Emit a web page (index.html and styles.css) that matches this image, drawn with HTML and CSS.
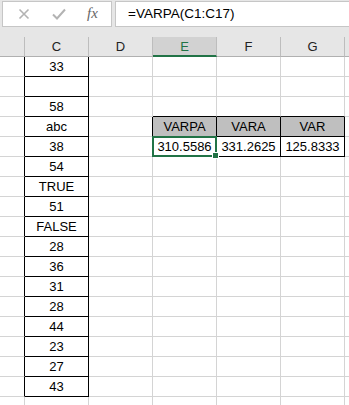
FILE: index.html
```html
<!DOCTYPE html>
<html lang="en">
<head>
  <meta charset="UTF-8" />
  <title>VARPA | Sheet</title>
  <link rel="stylesheet" href="styles.css">
</head>
<body>
  <div class="toolbar">
    <div class="namebox">
      <svg class="ico" width="12" height="12" viewBox="0 0 12 12"><path d="M1.5 1.5 L10.5 10.5 M10.5 1.5 L1.5 10.5" stroke="#b3b3b3" stroke-width="1.6" fill="none"/></svg>
      <svg class="ico" width="14" height="12" viewBox="0 0 14 12"><path d="M1 6.5 L5 10.5 L13 1.5" stroke="#b3b3b3" stroke-width="2" fill="none"/></svg>
      <span class="fx">fx</span>
    </div>
    <div class="formula">=VARPA(C1:C17)</div>
  </div>

  <div class="sheet">
    <div class="row head">
      <div class="c b"></div>
      <div class="c">C</div>
      <div class="c">D</div>
      <div class="c sel">E</div>
      <div class="c">F</div>
      <div class="c">G</div>
      <div class="c h"></div>
    </div>
    <div class="row"><div class="c b bl"></div><div class="c bx">33</div><div class="c"></div><div class="c"></div><div class="c"></div><div class="c"></div><div class="c h"></div></div>
    <div class="row"><div class="c b bl"></div><div class="c bx"></div><div class="c"></div><div class="c"></div><div class="c"></div><div class="c"></div><div class="c h"></div></div>
    <div class="row"><div class="c b bl"></div><div class="c bx">58</div><div class="c"></div><div class="c bt"></div><div class="c bt"></div><div class="c bt"></div><div class="c h"></div></div>
    <div class="row"><div class="c b bl"></div><div class="c bx">abc</div><div class="c bl"></div><div class="c bx th">VARPA</div><div class="c bx th">VARA</div><div class="c bx th">VAR</div><div class="c h"></div></div>
    <div class="row"><div class="c b bl"></div><div class="c bx">38</div><div class="c bl"></div><div class="c bx active">310.5586<span class="handle"></span></div><div class="c bx">331.2625</div><div class="c bx">125.8333</div><div class="c h"></div></div>
    <div class="row"><div class="c b bl"></div><div class="c bx">54</div><div class="c"></div><div class="c"></div><div class="c"></div><div class="c"></div><div class="c h"></div></div>
    <div class="row"><div class="c b bl"></div><div class="c bx">TRUE</div><div class="c"></div><div class="c"></div><div class="c"></div><div class="c"></div><div class="c h"></div></div>
    <div class="row"><div class="c b bl"></div><div class="c bx">51</div><div class="c"></div><div class="c"></div><div class="c"></div><div class="c"></div><div class="c h"></div></div>
    <div class="row"><div class="c b bl"></div><div class="c bx">FALSE</div><div class="c"></div><div class="c"></div><div class="c"></div><div class="c"></div><div class="c h"></div></div>
    <div class="row"><div class="c b bl"></div><div class="c bx">28</div><div class="c"></div><div class="c"></div><div class="c"></div><div class="c"></div><div class="c h"></div></div>
    <div class="row"><div class="c b bl"></div><div class="c bx">36</div><div class="c"></div><div class="c"></div><div class="c"></div><div class="c"></div><div class="c h"></div></div>
    <div class="row"><div class="c b bl"></div><div class="c bx">31</div><div class="c"></div><div class="c"></div><div class="c"></div><div class="c"></div><div class="c h"></div></div>
    <div class="row"><div class="c b bl"></div><div class="c bx">28</div><div class="c"></div><div class="c"></div><div class="c"></div><div class="c"></div><div class="c h"></div></div>
    <div class="row"><div class="c b bl"></div><div class="c bx">44</div><div class="c"></div><div class="c"></div><div class="c"></div><div class="c"></div><div class="c h"></div></div>
    <div class="row"><div class="c b bl"></div><div class="c bx">23</div><div class="c"></div><div class="c"></div><div class="c"></div><div class="c"></div><div class="c h"></div></div>
    <div class="row"><div class="c b bl"></div><div class="c bx">27</div><div class="c"></div><div class="c"></div><div class="c"></div><div class="c"></div><div class="c h"></div></div>
    <div class="row"><div class="c b bl"></div><div class="c bx">43</div><div class="c"></div><div class="c"></div><div class="c"></div><div class="c"></div><div class="c h"></div></div>
    <div class="row"><div class="c b"></div><div class="c"></div><div class="c"></div><div class="c"></div><div class="c"></div><div class="c"></div><div class="c h"></div></div>
  </div>
</body>
</html>
```

FILE: styles.css
```css
html, body {
  margin: 0;
  padding: 0;
  overflow: hidden;
}

body {
  width: 349px;
  height: 405px;
  background: #fff;
  font-family: 'Liberation Sans', Arial, sans-serif;
  font-size: 13px;
  color: #000;
}

.toolbar {
  display: flex;
  gap: 3px;
  height: 37px;
  padding: 1px 0 0 2px;
  box-sizing: border-box;
  background: #e6e6e6;
}

.namebox {
  width: 110px;
  height: 26px;
  box-sizing: border-box;
  border: 1px solid #c6c6c6;
  background: #fff;
  display: flex;
  align-items: center;
  padding-left: 15px;
  gap: 22px;
}

.ico {
  display: block;
}

.fx {
  font-family: 'Liberation Serif', 'Times New Roman', serif;
  font-style: italic;
  font-size: 15px;
  color: #666;
  margin-left: -1px;
  padding-bottom: 2px;
}

.formula {
  flex: 1;
  height: 26px;
  box-sizing: border-box;
  border: 1px solid #c6c6c6;
  border-right: none;
  background: #fff;
  padding-left: 12px;
  line-height: 24px;
  font-size: 13.5px;
}

.row {
  display: flex;
  height: 20px;
}

.c {
  flex: none;
  width: 64px;
  height: 20px;
  box-sizing: border-box;
  border-right: 1px solid #d4d4d4;
  border-bottom: 1px solid #d4d4d4;
  text-align: center;
  line-height: 20px;
  white-space: nowrap;
  position: relative;
}

.c.b {
  width: 25px;
}

.c.h {
  width: 20px;
}

.head {
  background: #e6e6e6;
}

.head .c {
  border-right-color: #bdbdbd;
  border-bottom-color: #b0b0b0;
  color: #222;
}

.head .c.sel {
  background: #d2d2d2;
  border-bottom: 2px solid #217346;
  color: #217346;
}

.c.bl {
  border-right-color: #000;
}

.c.bt {
  border-bottom-color: #000;
}

.c.bx {
  border-right-color: #000;
  border-bottom-color: #000;
}

.c.th {
  background: #bfbfbf;
}

.c.active::after {
  content: "";
  position: absolute;
  left: -1px;
  top: -1px;
  right: -1px;
  bottom: -1px;
  border: 2px solid #217346;
}

.handle {
  position: absolute;
  right: -3px;
  bottom: -3px;
  width: 5px;
  height: 5px;
  background: #217346;
  border: 1px solid #fff;
  z-index: 2;
}
```
